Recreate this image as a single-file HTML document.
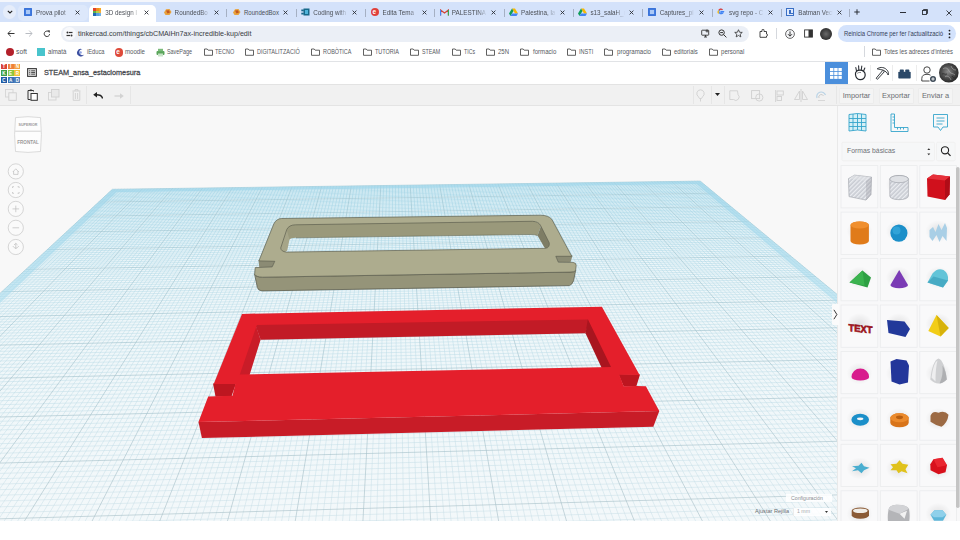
<!DOCTYPE html>
<html><head><meta charset="utf-8">
<style>
*{margin:0;padding:0;box-sizing:border-box}
html,body{width:960px;height:540px;overflow:hidden;background:#fff;font-family:"Liberation Sans",sans-serif;position:relative}
.a{position:absolute}
.tt{font-size:6.3px;line-height:9px;color:#4b4f56;white-space:nowrap;overflow:hidden;-webkit-mask-image:linear-gradient(90deg,#000 72%,transparent 97%)}
.bmt{top:47.5px;font-size:6.5px;line-height:9px;color:#3a3d42;white-space:nowrap}
.tbi{position:absolute;top:87px}
.btn{position:absolute;top:87.5px;height:16.5px;background:#f4f4f4;border:1px solid #ececec;border-radius:1px;font-size:7.4px;line-height:14.5px;color:#6a6d72;text-align:center}
.cell{position:absolute;width:36.5px;height:42.5px;background:#f4f5f6;border-radius:1px}
</style></head><body>
<div class="a" style="left:0;top:0;width:960px;height:2px;background:#f4f6fb"></div>
<div class="a" style="left:0;top:2px;width:960px;height:20px;background:#d4e2fa"></div>
<div class="a" style="left:18px;top:4.5px;width:70px;height:16.5px;border-radius:5px;background:#dde8fb"></div>
<div class="a" style="left:3px;top:5px;width:13px;height:14px;border-radius:7px;background:#e6edfa"></div>
<svg class="a" style="left:7px;top:10px" width="6" height="4" viewBox="0 0 6 4"><path d="M0.8 0.8 L3 3 L5.2 0.8" stroke="#222" stroke-width="1.1" fill="none"/></svg>
<div class="a" style="left:24.0px;top:8px;width:8px;height:8px;border-radius:1px;background:#4a86e8;box-shadow:inset 0 0 0 1.5px #3b73d8"><div style="position:absolute;left:2px;top:2px;width:4px;height:4px;background:#aac8f6"></div></div>
<div class="a tt" style="left:36.0px;top:8px;width:36px">Prova pilot</div>
<svg class="a" style="left:75.0px;top:10px" width="5" height="5" viewBox="0 0 5 5"><path d="M0.6 0.6L4.4 4.4M4.4 0.6L0.6 4.4" stroke="#2b2f36" stroke-width="0.9"/></svg>
<div class="a" style="left:88.5px;top:5px;width:67.5px;height:17px;background:#fff;border-radius:5px 5px 0 0"></div>
<div class="a" style="left:93.3px;top:8px;width:8px;height:8px"><div style="position:absolute;left:0.00px;top:0.00px;width:2.67px;height:2.67px;background:#e2412c"></div><div style="position:absolute;left:2.67px;top:0.00px;width:2.67px;height:2.67px;background:#f38c20"></div><div style="position:absolute;left:5.34px;top:0.00px;width:2.67px;height:2.67px;background:#f5a623"></div><div style="position:absolute;left:0.00px;top:2.67px;width:2.67px;height:2.67px;background:#60b246"></div><div style="position:absolute;left:2.67px;top:2.67px;width:2.67px;height:2.67px;background:#b2cf4a"></div><div style="position:absolute;left:5.34px;top:2.67px;width:2.67px;height:2.67px;background:#f3ae3e"></div><div style="position:absolute;left:0.00px;top:5.34px;width:2.67px;height:2.67px;background:#2167b1"></div><div style="position:absolute;left:2.67px;top:5.34px;width:2.67px;height:2.67px;background:#5da0dd"></div><div style="position:absolute;left:5.34px;top:5.34px;width:2.67px;height:2.67px;background:#6fb0e6"></div></div>
<div class="a tt" style="left:105.3px;top:8px;width:36px">3D design l</div>
<svg class="a" style="left:144.3px;top:10px" width="5" height="5" viewBox="0 0 5 5"><path d="M0.6 0.6L4.4 4.4M4.4 0.6L0.6 4.4" stroke="#2b2f36" stroke-width="0.9"/></svg>
<svg class="a" style="left:162.6px;top:8px" width="9" height="8" viewBox="0 0 9 8"><path d="M1 4.5L3 1.2L6.5 1L8.5 4L6.5 7L2.5 7Z" fill="#e8a13a"/><path d="M3 2.5L6 2.2L7 4.5L4.5 5.5Z" fill="#c2571f"/></svg>
<div class="a tt" style="left:174.6px;top:8px;width:36px">RoundedBo</div>
<svg class="a" style="left:213.6px;top:10px" width="5" height="5" viewBox="0 0 5 5"><path d="M0.6 0.6L4.4 4.4M4.4 0.6L0.6 4.4" stroke="#2b2f36" stroke-width="0.9"/></svg>
<div class="a" style="left:226.4px;top:9px;width:1px;height:8px;background:#a5b0c3"></div>
<svg class="a" style="left:231.9px;top:8px" width="9" height="8" viewBox="0 0 9 8"><path d="M1 4.5L3 1.2L6.5 1L8.5 4L6.5 7L2.5 7Z" fill="#e8a13a"/><path d="M3 2.5L6 2.2L7 4.5L4.5 5.5Z" fill="#c2571f"/></svg>
<svg class="a" style="left:243.90px;top:14.80px;overflow:visible" width="1" height="1"><text x="0" y="0" font-family="Liberation Sans" font-size="6.3" fill="#4b4f56" font-weight="normal" textLength="35" lengthAdjust="spacingAndGlyphs">RoundedBox</text></svg>
<svg class="a" style="left:282.9px;top:10px" width="5" height="5" viewBox="0 0 5 5"><path d="M0.6 0.6L4.4 4.4M4.4 0.6L0.6 4.4" stroke="#2b2f36" stroke-width="0.9"/></svg>
<div class="a" style="left:295.7px;top:9px;width:1px;height:8px;background:#a5b0c3"></div>
<svg class="a" style="left:301.2px;top:8px" width="9" height="8" viewBox="0 0 9 8"><rect x="2.5" y="0.5" width="6" height="7" fill="#17698a"/><rect x="0.3" y="1.5" width="2.5" height="1.8" fill="#17698a"/><rect x="0.3" y="4.7" width="2.5" height="1.8" fill="#17698a"/><rect x="4" y="2" width="3" height="4" fill="#4fb3d9"/></svg>
<div class="a tt" style="left:313.2px;top:8px;width:36px">Coding with</div>
<svg class="a" style="left:352.2px;top:10px" width="5" height="5" viewBox="0 0 5 5"><path d="M0.6 0.6L4.4 4.4M4.4 0.6L0.6 4.4" stroke="#2b2f36" stroke-width="0.9"/></svg>
<div class="a" style="left:365.0px;top:9px;width:1px;height:8px;background:#a5b0c3"></div>
<div class="a" style="left:370.5px;top:8px;width:8px;height:8px;border-radius:4px;background:#e0403a"><div style="position:absolute;left:2px;top:-1px;font-size:6.5px;line-height:9px;color:#fff;font-weight:bold;font-family:Liberation Sans,sans-serif">e</div></div>
<div class="a tt" style="left:382.5px;top:8px;width:36px">Edita Tema</div>
<svg class="a" style="left:421.5px;top:10px" width="5" height="5" viewBox="0 0 5 5"><path d="M0.6 0.6L4.4 4.4M4.4 0.6L0.6 4.4" stroke="#2b2f36" stroke-width="0.9"/></svg>
<div class="a" style="left:434.3px;top:9px;width:1px;height:8px;background:#a5b0c3"></div>
<svg class="a" style="left:439.8px;top:8.5px" width="9" height="7" viewBox="0 0 9 7"><path d="M0.5 6.5V1L4.5 4L8.5 1V6.5" stroke="#d44638" stroke-width="1.3" fill="none"/><path d="M0.5 6.5V1" stroke="#4285f4" stroke-width="1.3"/><path d="M8.5 6.5V1" stroke="#34a853" stroke-width="1.3"/></svg>
<div class="a tt" style="left:451.8px;top:8px;width:36px">PALESTINA</div>
<svg class="a" style="left:490.8px;top:10px" width="5" height="5" viewBox="0 0 5 5"><path d="M0.6 0.6L4.4 4.4M4.4 0.6L0.6 4.4" stroke="#2b2f36" stroke-width="0.9"/></svg>
<div class="a" style="left:503.6px;top:9px;width:1px;height:8px;background:#a5b0c3"></div>
<svg class="a" style="left:509.1px;top:8px" width="9" height="8" viewBox="0 0 9 8"><path d="M3 0.5H6L9 5.5H6Z" fill="#f6b704"/><path d="M3 0.5L0 5.5L1.5 8L4.5 3Z" fill="#0f9d58"/><path d="M1.5 8H7.5L9 5.5H3Z" fill="#4285f4"/></svg>
<div class="a tt" style="left:521.1px;top:8px;width:36px">Palestina, la</div>
<svg class="a" style="left:560.1px;top:10px" width="5" height="5" viewBox="0 0 5 5"><path d="M0.6 0.6L4.4 4.4M4.4 0.6L0.6 4.4" stroke="#2b2f36" stroke-width="0.9"/></svg>
<div class="a" style="left:572.9px;top:9px;width:1px;height:8px;background:#a5b0c3"></div>
<svg class="a" style="left:578.4px;top:8px" width="9" height="8" viewBox="0 0 9 8"><path d="M3 0.5H6L9 5.5H6Z" fill="#f6b704"/><path d="M3 0.5L0 5.5L1.5 8L4.5 3Z" fill="#0f9d58"/><path d="M1.5 8H7.5L9 5.5H3Z" fill="#4285f4"/></svg>
<div class="a tt" style="left:590.4px;top:8px;width:36px">s13_salaH_m</div>
<svg class="a" style="left:629.4px;top:10px" width="5" height="5" viewBox="0 0 5 5"><path d="M0.6 0.6L4.4 4.4M4.4 0.6L0.6 4.4" stroke="#2b2f36" stroke-width="0.9"/></svg>
<div class="a" style="left:642.2px;top:9px;width:1px;height:8px;background:#a5b0c3"></div>
<div class="a" style="left:647.7px;top:8px;width:8px;height:8px;border-radius:1px;background:#4a86e8;box-shadow:inset 0 0 0 1.5px #3b73d8"><div style="position:absolute;left:2px;top:2px;width:4px;height:4px;background:#aac8f6"></div></div>
<div class="a tt" style="left:659.7px;top:8px;width:36px">Captures_pi</div>
<svg class="a" style="left:698.7px;top:10px" width="5" height="5" viewBox="0 0 5 5"><path d="M0.6 0.6L4.4 4.4M4.4 0.6L0.6 4.4" stroke="#2b2f36" stroke-width="0.9"/></svg>
<div class="a" style="left:711.5px;top:9px;width:1px;height:8px;background:#a5b0c3"></div>
<svg class="a" style="left:717.0px;top:8px" width="8" height="8" viewBox="0 0 8 8"><path d="M7.2 3.5H4V4.8H5.9A2.2 2.2 0 1 1 5.4 1.8" stroke="#4285f4" stroke-width="1.2" fill="none"/><path d="M1.8 2.3A2.4 2.4 0 0 1 5.5 1.7" stroke="#ea4335" stroke-width="1.2" fill="none"/><path d="M1.6 5.5A2.4 2.4 0 0 1 1.6 2.6" stroke="#fbbc05" stroke-width="1.2" fill="none"/></svg>
<div class="a tt" style="left:729.0px;top:8px;width:36px">svg repo - C</div>
<svg class="a" style="left:768.0px;top:10px" width="5" height="5" viewBox="0 0 5 5"><path d="M0.6 0.6L4.4 4.4M4.4 0.6L0.6 4.4" stroke="#2b2f36" stroke-width="0.9"/></svg>
<div class="a" style="left:780.8px;top:9px;width:1px;height:8px;background:#a5b0c3"></div>
<div class="a" style="left:786.3px;top:8px;width:8px;height:8px;border:1px solid #3a6fc4;background:#dfe9fb"><div style="position:absolute;left:2px;top:1px;width:1.5px;height:4px;background:#3a6fc4"></div><div style="position:absolute;left:2px;top:4px;width:3.5px;height:1.2px;background:#3a6fc4"></div></div>
<div class="a tt" style="left:798.3px;top:8px;width:36px">Batman Vect</div>
<svg class="a" style="left:837.3px;top:10px" width="5" height="5" viewBox="0 0 5 5"><path d="M0.6 0.6L4.4 4.4M4.4 0.6L0.6 4.4" stroke="#2b2f36" stroke-width="0.9"/></svg>
<div class="a" style="left:848.5px;top:9px;width:1px;height:8px;background:#a5b0c3"></div>
<svg class="a" style="left:854px;top:9px" width="6" height="6" viewBox="0 0 6 6"><path d="M3 0.3V5.7M0.3 3H5.7" stroke="#2b2f36" stroke-width="1"/></svg>
<div class="a" style="left:900px;top:12px;width:6px;height:1px;background:#2b2f36"></div>
<svg class="a" style="left:922px;top:9px" width="6" height="6" viewBox="0 0 6 6"><path d="M1.5 1.5V0.5H5.5V4.5H4.5" stroke="#2b2f36" stroke-width="0.9" fill="none"/><rect x="0.5" y="1.5" width="4" height="4" stroke="#2b2f36" stroke-width="0.9" fill="none"/></svg>
<svg class="a" style="left:945.5px;top:9.5px" width="6" height="6" viewBox="0 0 6 6"><path d="M0.5 0.5L5.5 5.5M5.5 0.5L0.5 5.5" stroke="#2b2f36" stroke-width="0.9"/></svg>
<div class="a" style="left:0;top:22px;width:960px;height:20px;background:#fff"></div>
<svg class="a" style="left:7px;top:30px" width="8" height="7" viewBox="0 0 8 7"><path d="M7.5 3.5H1M3.8 0.6L0.9 3.5L3.8 6.4" stroke="#333" stroke-width="1" fill="none"/></svg>
<svg class="a" style="left:25px;top:30px" width="8" height="7" viewBox="0 0 8 7"><path d="M0.5 3.5H7M4.2 0.6L7.1 3.5L4.2 6.4" stroke="#b9bcc2" stroke-width="1" fill="none"/></svg>
<svg class="a" style="left:43px;top:29.5px" width="8" height="8" viewBox="0 0 8 8"><path d="M6.6 4.2A2.7 2.7 0 1 1 5.6 1.7" stroke="#333" stroke-width="1" fill="none"/><path d="M4.4 0.3L7 0.6L6.5 3.1Z" fill="#333"/></svg>
<div class="a" style="left:61px;top:25.5px;width:688px;height:16px;border-radius:8px;background:#ebeff6"></div>
<div class="a" style="left:62.5px;top:27px;width:13px;height:13px;border-radius:7px;background:#f8f9fc"></div>
<svg class="a" style="left:65.5px;top:30.5px" width="7" height="6" viewBox="0 0 7 6"><circle cx="1.5" cy="1.5" r="1" fill="#333"/><rect x="3" y="0.9" width="3.5" height="1.2" fill="#333"/><rect x="0.5" y="3.9" width="3.5" height="1.2" fill="#333"/><circle cx="5.5" cy="4.5" r="1" fill="#333"/></svg>
<svg class="a" style="left:78.30px;top:36.00px;overflow:visible" width="1" height="1"><text x="0" y="0" font-family="Liberation Sans" font-size="7.1" fill="#3a3d42" font-weight="normal" textLength="173.4" lengthAdjust="spacingAndGlyphs">tinkercad.com/things/cbCMAiHn7ax-incredible-kup/edit</text></svg>
<svg class="a" style="left:701px;top:29px" width="9" height="9" viewBox="0 0 9 9"><rect x="0.7" y="1.2" width="7" height="5" rx="0.5" stroke="#333" stroke-width="0.9" fill="none"/><path d="M3 8H6M4.5 6V8" stroke="#333" stroke-width="0.9"/><path d="M6 0.5V3.5M4.5 2H7.5" stroke="#333" stroke-width="0.9"/></svg>
<svg class="a" style="left:718px;top:29px" width="9" height="9" viewBox="0 0 9 9"><circle cx="3.6" cy="3.6" r="2.7" stroke="#333" stroke-width="1" fill="none"/><path d="M5.6 5.6L8.4 8.4M2.2 3.6H5" stroke="#333" stroke-width="1"/></svg>
<svg class="a" style="left:734px;top:29px" width="9" height="9" viewBox="0 0 10 10"><path d="M5 0.8L6.2 3.6L9.2 3.8L6.9 5.8L7.6 8.8L5 7.2L2.4 8.8L3.1 5.8L0.8 3.8L3.8 3.6Z" stroke="#333" stroke-width="0.9" fill="none" stroke-linejoin="round"/></svg>
<svg class="a" style="left:759px;top:29px" width="9" height="9" viewBox="0 0 9 9"><path d="M1 2.5H3V1.2A1 1 0 0 1 5 1.2V2.5H7.5V5A1 1 0 0 1 7.5 7V8.3H1Z" stroke="#333" stroke-width="0.9" fill="none"/></svg>
<div class="a" style="left:775.5px;top:28px;width:1px;height:11px;background:#d5d8dd"></div>
<svg class="a" style="left:785px;top:28.5px" width="10" height="10" viewBox="0 0 10 10"><circle cx="5" cy="5" r="4.4" stroke="#444" stroke-width="0.8" fill="#f6f7f9"/><path d="M5 2.4V7M3 5.2L5 7.2L7 5.2" stroke="#222" stroke-width="0.9" fill="none"/></svg>
<svg class="a" style="left:803.5px;top:29px" width="9" height="9" viewBox="0 0 9 9"><rect x="0.6" y="0.9" width="7.8" height="7.2" stroke="#333" stroke-width="0.9" fill="none"/><rect x="4.5" y="0.9" width="3.9" height="7.2" fill="#333"/></svg>
<div class="a" style="left:820px;top:27.5px;width:12px;height:12px;border-radius:6px;background:radial-gradient(circle at 50% 50%,#6a6a6a 0,#3c3c3c 55%,#1a1a1a 100%)"></div>
<div class="a" style="left:837.5px;top:25px;width:118.5px;height:16.5px;border-radius:8.5px;background:#d3e2fc"></div>
<svg class="a" style="left:843.50px;top:36.00px;overflow:visible" width="1" height="1"><text x="0" y="0" font-family="Liberation Sans" font-size="6.9" fill="#34405a" font-weight="normal" textLength="99" lengthAdjust="spacingAndGlyphs">Reinicia Chrome per fer l'actualització</text></svg>
<svg class="a" style="left:947.5px;top:28.5px" width="3" height="10" viewBox="0 0 3 10"><circle cx="1.5" cy="1.6" r="0.9" fill="#222"/><circle cx="1.5" cy="5" r="0.9" fill="#222"/><circle cx="1.5" cy="8.4" r="0.9" fill="#222"/></svg>
<div class="a" style="left:0;top:42px;width:960px;height:20px;background:#fff;border-bottom:1px solid #e1e3e6"></div>
<div class="a" style="left:6px;top:48px;width:8px;height:8px;border-radius:4px;background:#b3202a"></div>
<svg class="a" style="left:15.80px;top:54.30px;overflow:visible" width="1" height="1"><text x="0" y="0" font-family="Liberation Sans" font-size="6.7" fill="#55585e" font-weight="normal" textLength="10.9" lengthAdjust="spacingAndGlyphs">soft</text></svg>
<div class="a" style="left:37px;top:48px;width:8px;height:8px;background:#49c4cc"></div>
<svg class="a" style="left:47.50px;top:54.30px;overflow:visible" width="1" height="1"><text x="0" y="0" font-family="Liberation Sans" font-size="6.7" fill="#55585e" font-weight="normal" textLength="18.3" lengthAdjust="spacingAndGlyphs">almatà</text></svg>
<svg class="a" style="left:75.5px;top:47.5px" width="9" height="9" viewBox="0 0 9 9"><path d="M6.5 1.2A3.8 3.8 0 1 0 8.2 6.5A3 3 0 1 1 6.5 1.2Z" fill="#3b4fa0"/><circle cx="4.5" cy="4.5" r="1.3" fill="#8fa2e0"/></svg>
<svg class="a" style="left:86.70px;top:54.30px;overflow:visible" width="1" height="1"><text x="0" y="0" font-family="Liberation Sans" font-size="6.7" fill="#55585e" font-weight="normal" textLength="17.5" lengthAdjust="spacingAndGlyphs">iEduca</text></svg>
<div class="a" style="left:114.5px;top:48px;width:8.5px;height:8.5px;border-radius:4.3px;background:#de4a3a"></div>
<div class="a" style="left:116.3px;top:47.3px;font-size:6.5px;line-height:9px;color:#fff;font-weight:bold">e</div>
<svg class="a" style="left:125.00px;top:54.30px;overflow:visible" width="1" height="1"><text x="0" y="0" font-family="Liberation Sans" font-size="6.7" fill="#55585e" font-weight="normal" textLength="20" lengthAdjust="spacingAndGlyphs">moodle</text></svg>
<svg class="a" style="left:156px;top:47.5px" width="9" height="9" viewBox="0 0 9 9"><rect x="0.5" y="3" width="8" height="4" rx="1" fill="#5aa55a"/><rect x="2" y="0.8" width="5" height="2.5" fill="#7bbb7b"/><rect x="2" y="5.5" width="5" height="3" fill="#c7e3c7"/></svg>
<svg class="a" style="left:166.70px;top:54.30px;overflow:visible" width="1" height="1"><text x="0" y="0" font-family="Liberation Sans" font-size="6.7" fill="#55585e" font-weight="normal" textLength="25" lengthAdjust="spacingAndGlyphs">SavePage</text></svg>
<svg class="a" style="left:203.5px;top:48px" width="9" height="8" viewBox="0 0 9 8"><path d="M0.5 1V7.3H8.5V2.2H4.2L3.2 1Z" stroke="#444" stroke-width="0.85" fill="none" stroke-linejoin="round"/></svg>
<svg class="a" style="left:215.00px;top:54.30px;overflow:visible" width="1" height="1"><text x="0" y="0" font-family="Liberation Sans" font-size="6.7" fill="#55585e" font-weight="normal" textLength="19.3" lengthAdjust="spacingAndGlyphs">TECNO</text></svg>
<svg class="a" style="left:245.0px;top:48px" width="9" height="8" viewBox="0 0 9 8"><path d="M0.5 1V7.3H8.5V2.2H4.2L3.2 1Z" stroke="#444" stroke-width="0.85" fill="none" stroke-linejoin="round"/></svg>
<svg class="a" style="left:257.30px;top:54.30px;overflow:visible" width="1" height="1"><text x="0" y="0" font-family="Liberation Sans" font-size="6.7" fill="#55585e" font-weight="normal" textLength="42.7" lengthAdjust="spacingAndGlyphs">DIGITALITZACIÓ</text></svg>
<svg class="a" style="left:311.0px;top:48px" width="9" height="8" viewBox="0 0 9 8"><path d="M0.5 1V7.3H8.5V2.2H4.2L3.2 1Z" stroke="#444" stroke-width="0.85" fill="none" stroke-linejoin="round"/></svg>
<svg class="a" style="left:323.30px;top:54.30px;overflow:visible" width="1" height="1"><text x="0" y="0" font-family="Liberation Sans" font-size="6.7" fill="#55585e" font-weight="normal" textLength="28.4" lengthAdjust="spacingAndGlyphs">ROBÒTICA</text></svg>
<svg class="a" style="left:362.8px;top:48px" width="9" height="8" viewBox="0 0 9 8"><path d="M0.5 1V7.3H8.5V2.2H4.2L3.2 1Z" stroke="#444" stroke-width="0.85" fill="none" stroke-linejoin="round"/></svg>
<svg class="a" style="left:375.00px;top:54.30px;overflow:visible" width="1" height="1"><text x="0" y="0" font-family="Liberation Sans" font-size="6.7" fill="#55585e" font-weight="normal" textLength="24" lengthAdjust="spacingAndGlyphs">TUTORIA</text></svg>
<svg class="a" style="left:410.0px;top:48px" width="9" height="8" viewBox="0 0 9 8"><path d="M0.5 1V7.3H8.5V2.2H4.2L3.2 1Z" stroke="#444" stroke-width="0.85" fill="none" stroke-linejoin="round"/></svg>
<svg class="a" style="left:421.70px;top:54.30px;overflow:visible" width="1" height="1"><text x="0" y="0" font-family="Liberation Sans" font-size="6.7" fill="#55585e" font-weight="normal" textLength="18.3" lengthAdjust="spacingAndGlyphs">STEAM</text></svg>
<svg class="a" style="left:451.8px;top:48px" width="9" height="8" viewBox="0 0 9 8"><path d="M0.5 1V7.3H8.5V2.2H4.2L3.2 1Z" stroke="#444" stroke-width="0.85" fill="none" stroke-linejoin="round"/></svg>
<svg class="a" style="left:464.00px;top:54.30px;overflow:visible" width="1" height="1"><text x="0" y="0" font-family="Liberation Sans" font-size="6.7" fill="#55585e" font-weight="normal" textLength="11" lengthAdjust="spacingAndGlyphs">TICs</text></svg>
<svg class="a" style="left:486.0px;top:48px" width="9" height="8" viewBox="0 0 9 8"><path d="M0.5 1V7.3H8.5V2.2H4.2L3.2 1Z" stroke="#444" stroke-width="0.85" fill="none" stroke-linejoin="round"/></svg>
<svg class="a" style="left:498.30px;top:54.30px;overflow:visible" width="1" height="1"><text x="0" y="0" font-family="Liberation Sans" font-size="6.7" fill="#55585e" font-weight="normal" textLength="11" lengthAdjust="spacingAndGlyphs">25N</text></svg>
<svg class="a" style="left:520.0px;top:48px" width="9" height="8" viewBox="0 0 9 8"><path d="M0.5 1V7.3H8.5V2.2H4.2L3.2 1Z" stroke="#444" stroke-width="0.85" fill="none" stroke-linejoin="round"/></svg>
<svg class="a" style="left:532.70px;top:54.30px;overflow:visible" width="1" height="1"><text x="0" y="0" font-family="Liberation Sans" font-size="6.7" fill="#55585e" font-weight="normal" textLength="23.3" lengthAdjust="spacingAndGlyphs">formacio</text></svg>
<svg class="a" style="left:566.8px;top:48px" width="9" height="8" viewBox="0 0 9 8"><path d="M0.5 1V7.3H8.5V2.2H4.2L3.2 1Z" stroke="#444" stroke-width="0.85" fill="none" stroke-linejoin="round"/></svg>
<svg class="a" style="left:579.00px;top:54.30px;overflow:visible" width="1" height="1"><text x="0" y="0" font-family="Liberation Sans" font-size="6.7" fill="#55585e" font-weight="normal" textLength="14.3" lengthAdjust="spacingAndGlyphs">INSTI</text></svg>
<svg class="a" style="left:604.2px;top:48px" width="9" height="8" viewBox="0 0 9 8"><path d="M0.5 1V7.3H8.5V2.2H4.2L3.2 1Z" stroke="#444" stroke-width="0.85" fill="none" stroke-linejoin="round"/></svg>
<svg class="a" style="left:616.70px;top:54.30px;overflow:visible" width="1" height="1"><text x="0" y="0" font-family="Liberation Sans" font-size="6.7" fill="#55585e" font-weight="normal" textLength="34" lengthAdjust="spacingAndGlyphs">programacio</text></svg>
<svg class="a" style="left:661.5px;top:48px" width="9" height="8" viewBox="0 0 9 8"><path d="M0.5 1V7.3H8.5V2.2H4.2L3.2 1Z" stroke="#444" stroke-width="0.85" fill="none" stroke-linejoin="round"/></svg>
<svg class="a" style="left:674.00px;top:54.30px;overflow:visible" width="1" height="1"><text x="0" y="0" font-family="Liberation Sans" font-size="6.7" fill="#55585e" font-weight="normal" textLength="23.7" lengthAdjust="spacingAndGlyphs">editorials</text></svg>
<svg class="a" style="left:708.5px;top:48px" width="9" height="8" viewBox="0 0 9 8"><path d="M0.5 1V7.3H8.5V2.2H4.2L3.2 1Z" stroke="#444" stroke-width="0.85" fill="none" stroke-linejoin="round"/></svg>
<svg class="a" style="left:720.70px;top:54.30px;overflow:visible" width="1" height="1"><text x="0" y="0" font-family="Liberation Sans" font-size="6.7" fill="#55585e" font-weight="normal" textLength="23.3" lengthAdjust="spacingAndGlyphs">personal</text></svg>
<svg class="a" style="left:872.0px;top:48px" width="9" height="8" viewBox="0 0 9 8"><path d="M0.5 1V7.3H8.5V2.2H4.2L3.2 1Z" stroke="#444" stroke-width="0.85" fill="none" stroke-linejoin="round"/></svg>
<svg class="a" style="left:884.00px;top:54.30px;overflow:visible" width="1" height="1"><text x="0" y="0" font-family="Liberation Sans" font-size="6.7" fill="#55585e" font-weight="normal" textLength="69" lengthAdjust="spacingAndGlyphs">Totes les adreces d'interès</text></svg>
<div class="a" style="left:863.5px;top:46px;width:1px;height:11px;background:#d5d8dd"></div>
<!-- tinkercad header -->
<div class="a" style="left:0;top:62px;width:960px;height:23px;background:#fff;border-bottom:1px solid #e3e3e3"></div>
<div class="a" style="left:1px;top:63.8px;width:19.5px;height:19.2px">
<div class="a" style="left:0;top:0;width:5.8px;height:5.4px;background:#d9443a"></div>
<div class="a" style="left:6.6px;top:0;width:6px;height:5.4px;background:#ef7f3a"></div>
<div class="a" style="left:13.3px;top:0;width:6px;height:5.4px;background:#f3a041"></div>
<div class="a" style="left:0;top:6.2px;width:5.8px;height:5.8px;background:#3f9f49"></div>
<div class="a" style="left:6.6px;top:6.2px;width:6px;height:5.8px;background:#8cc63f"></div>
<div class="a" style="left:13.3px;top:6.2px;width:6px;height:5.8px;background:#f2c332"></div>
<div class="a" style="left:0;top:12.8px;width:5.8px;height:6px;background:#1f5aa3"></div>
<div class="a" style="left:6.6px;top:12.8px;width:6px;height:6px;background:#3a72b5"></div>
<div class="a" style="left:13.3px;top:12.8px;width:6px;height:6px;background:#4a7db8"></div>
<svg class="a" style="left:0;top:0" width="20" height="19" viewBox="0 0 20 19"><g font-family="Liberation Sans" font-weight="bold" font-size="4.6" fill="#fff" text-anchor="middle"><text x="2.9" y="4.4">T</text><text x="9.6" y="4.4">I</text><text x="16.3" y="4.4">N</text><text x="2.9" y="10.8">K</text><text x="9.6" y="10.8">E</text><text x="16.3" y="10.8">R</text><text x="2.9" y="17.5">C</text><text x="9.6" y="17.5">A</text><text x="16.3" y="17.5">D</text></g></svg>
</div>
<svg class="a" style="left:26.5px;top:67.5px" width="10" height="9" viewBox="0 0 10 9"><rect x="0.6" y="0.6" width="8.8" height="7.8" fill="#d9d9d9" stroke="#333" stroke-width="1"/><path d="M2.2 2.8H3.2M4.2 2.8H8M2.2 4.5H3.2M4.2 4.5H8M2.2 6.2H3.2M4.2 6.2H8" stroke="#444" stroke-width="0.9"/></svg>
<svg class="a" style="left:43.7px;top:75.3px;overflow:visible" width="1" height="1"><text x="0" y="0" font-family="Liberation Sans" font-size="7.8" font-weight="normal" fill="#45484d" stroke="#45484d" stroke-width="0.28" textLength="96.3" lengthAdjust="spacingAndGlyphs">STEAM_ansa_estaciomesura</text></svg>
<div class="a" style="left:825px;top:62.2px;width:22.7px;height:21.8px;background:#4b8fdc"></div>
<svg class="a" style="left:830px;top:68px" width="12" height="11" viewBox="0 0 12 11"><g fill="#fff"><rect x="0" y="0" width="3.4" height="3.1"/><rect x="4.2" y="0" width="3.4" height="3.1"/><rect x="8.4" y="0" width="3.4" height="3.1"/><rect x="0" y="3.9" width="3.4" height="3.1"/><rect x="4.2" y="3.9" width="3.4" height="3.1"/><rect x="8.4" y="3.9" width="3.4" height="3.1"/><rect x="0" y="7.8" width="3.4" height="3.1"/><rect x="4.2" y="7.8" width="3.4" height="3.1"/><rect x="8.4" y="7.8" width="3.4" height="3.1"/></g></svg>
<div class="a" style="left:870px;top:65px;width:1px;height:16px;background:#ececec"></div>
<div class="a" style="left:892px;top:65px;width:1px;height:16px;background:#ececec"></div>
<div class="a" style="left:915.5px;top:65px;width:1px;height:16px;background:#ececec"></div>
<svg class="a" style="left:852.5px;top:64px" width="14" height="17" viewBox="0 0 14 17"><path d="M2.5 10.5C2 8 4 6.2 7 6.2C10 6.2 12.3 8 12.2 11C12.1 14 10 15.8 7 15.6C4 15.4 2.8 13.5 2.5 10.5Z" stroke="#252a30" stroke-width="1.2" fill="#fff"/><path d="M4.2 9.5C5 8.5 6.5 8.2 8 8.6" stroke="#555" stroke-width="0.7" fill="none"/><path d="M3.5 6.8L2.8 3.5M5.8 5.8L5.6 1.8M8.3 5.8L8.8 2M10.6 7L11.8 4" stroke="#2e3238" stroke-width="1.1" stroke-linecap="round"/></svg>
<svg class="a" style="left:874.5px;top:65.5px" width="14" height="15" viewBox="0 0 14 15"><path d="M2.2 2.8C5.5 0.6 10 1 12.6 4.8C13.4 6 13.6 7.5 13.2 9C12.2 6.8 10.5 5 8.2 4.2C6.5 3.6 4.2 3.4 2.2 2.8Z" stroke="#23272c" stroke-width="0.9" fill="#fff" stroke-linejoin="round"/><path d="M7.8 4.3L1.2 12.2L2.4 13.4L9.4 5.6Z" stroke="#23272c" stroke-width="0.9" fill="#fff" stroke-linejoin="round"/></svg>
<svg class="a" style="left:897.5px;top:68.5px" width="13" height="10" viewBox="0 0 13 10"><rect x="0.3" y="2.8" width="12.4" height="6.8" rx="0.8" fill="#2a4868"/><rect x="1.8" y="0.6" width="4" height="2.8" rx="0.6" fill="#2a4868"/><rect x="7.3" y="0.6" width="4" height="2.8" rx="0.6" fill="#2a4868"/></svg>
<svg class="a" style="left:921px;top:66px" width="16" height="17" viewBox="0 0 16 17"><circle cx="6" cy="4" r="3.2" stroke="#333" stroke-width="0.9" fill="none"/><path d="M0.8 15V12.5C0.8 9.5 3 8.3 6 8.3C7.5 8.3 8.6 8.6 9.5 9.2M0.8 15H8.5" stroke="#333" stroke-width="0.9" fill="none"/><circle cx="12" cy="13" r="3" fill="#3d4a57"/><path d="M12 11.3V14.7M10.3 13H13.7" stroke="#fff" stroke-width="0.9"/></svg>
<svg class="a" style="left:939px;top:63px" width="20" height="20" viewBox="0 0 20 20"><defs><radialGradient id="avg" cx="45%" cy="45%" r="55%"><stop offset="0" stop-color="#8a8a8a"/><stop offset="0.6" stop-color="#4b4b4b"/><stop offset="1" stop-color="#2b2b2b"/></radialGradient></defs><circle cx="9.8" cy="9.8" r="9.8" fill="url(#avg)"/><path d="M4 6C6 4 9 5 10 8C11 11 14 10 16 12M6 14C8 12 11 14 12 17M12 3C13 6 15 7 17 7" stroke="#c8c8c8" stroke-width="0.8" fill="none" opacity="0.6"/><path d="M3 11C5 10 6 12 8 11M13 13C14 15 15 15 17 15" stroke="#222" stroke-width="1" fill="none" opacity="0.7"/></svg>
<!-- toolbar -->
<div class="a" style="left:0;top:85px;width:960px;height:21px;background:#f1f1f1;border-bottom:1px solid #e4e4e4"></div>
<svg class="a" style="left:5px;top:89px" width="12" height="12" viewBox="0 0 12 12"><rect x="0.5" y="0.5" width="7.5" height="7.5" fill="none" stroke="#d5d5d5" stroke-width="0.9"/><rect x="3.8" y="3.8" width="7.5" height="7.5" fill="#f1f1f1" stroke="#d0d0d0" stroke-width="0.9"/></svg>
<svg class="a" style="left:26.5px;top:88.5px" width="11" height="12" viewBox="0 0 11 12"><path d="M6.5 2.5V1.5H1V10.5H3.5" fill="none" stroke="#333" stroke-width="1"/><rect x="2.8" y="0.5" width="2" height="1.6" fill="#333"/><rect x="4" y="4.5" width="6.3" height="6.8" fill="#fff" stroke="#333" stroke-width="1"/></svg>
<svg class="a" style="left:48px;top:89px" width="12" height="12" viewBox="0 0 12 12"><rect x="0.5" y="3.5" width="7.5" height="7.5" fill="none" stroke="#d3d3d3" stroke-width="0.9"/><rect x="3.5" y="0.5" width="7.5" height="7.5" fill="#e9e9e9" stroke="#d0d0d0" stroke-width="0.9"/></svg>
<svg class="a" style="left:71.5px;top:88.5px" width="9" height="12" viewBox="0 0 9 12"><path d="M0.5 2H8.5M3 2V0.7H6V2" fill="none" stroke="#d0d0d0" stroke-width="0.9"/><path d="M1.2 2.5V11.3H7.8V2.5M3.4 4V10M5.6 4V10" fill="none" stroke="#d0d0d0" stroke-width="0.9"/></svg>
<div class="a" style="left:86px;top:86px;width:1px;height:18px;background:#e6e6e6"></div>
<svg class="a" style="left:93px;top:91.5px" width="10" height="7" viewBox="0 0 10 7"><path d="M9.5 6.5C9 3.5 7 2.8 3.5 2.8" fill="none" stroke="#222" stroke-width="1.4"/><path d="M0.2 2.8L4 0V5.6Z" fill="#222"/></svg>
<svg class="a" style="left:113.5px;top:91.5px" width="10" height="7" viewBox="0 0 10 7"><path d="M0.5 4H6.5" fill="none" stroke="#d2d2d2" stroke-width="1.3"/><path d="M9.8 4L6 1.2V6.8Z" fill="#d2d2d2"/></svg>
<div class="a" style="left:130px;top:86px;width:1px;height:18px;background:#e6e6e6"></div>
<div class="a" style="left:692.5px;top:86px;width:1px;height:18px;background:#e6e6e6"></div>
<svg class="a" style="left:696px;top:89px" width="9" height="13" viewBox="0 0 9 13"><path d="M4.5 0.8A3.8 3.8 0 0 0 2.3 7.6L3.5 9.5H5.5L6.7 7.6A3.8 3.8 0 0 0 4.5 0.8Z" fill="none" stroke="#cfcfcf" stroke-width="0.9"/><path d="M4.5 9.5V12.5" stroke="#cfcfcf" stroke-width="0.9"/></svg>
<div class="a" style="left:710.5px;top:86px;width:1px;height:18px;background:#e6e6e6"></div>
<svg class="a" style="left:714.5px;top:93px" width="5" height="3" viewBox="0 0 5 3"><path d="M0 0H5L2.5 3Z" fill="#222"/></svg>
<div class="a" style="left:724px;top:86px;width:1px;height:18px;background:#e6e6e6"></div>
<svg class="a" style="left:728.5px;top:89.5px" width="13" height="12" viewBox="0 0 13 12"><path d="M0.8 0.8H8.5L9 4.5A3.3 3.3 0 1 1 4.5 9.5L0.8 9.5Z" fill="none" stroke="#d0d0d0" stroke-width="0.9"/></svg>
<svg class="a" style="left:751px;top:89.5px" width="13" height="12" viewBox="0 0 13 12"><rect x="0.6" y="0.6" width="8" height="8" fill="none" stroke="#d0d0d0" stroke-width="0.9"/><circle cx="8.3" cy="7.5" r="3.6" fill="none" stroke="#d0d0d0" stroke-width="0.9"/></svg>
<svg class="a" style="left:775px;top:89.5px" width="9" height="12" viewBox="0 0 9 12"><path d="M0.6 0V12" stroke="#d0d0d0" stroke-width="0.9"/><rect x="2" y="1" width="6.3" height="4" fill="none" stroke="#d0d0d0" stroke-width="0.9"/><rect x="2" y="6.5" width="4.5" height="4" fill="none" stroke="#d0d0d0" stroke-width="0.9"/></svg>
<svg class="a" style="left:793.5px;top:89px" width="14" height="13" viewBox="0 0 14 13"><path d="M7 0V13" stroke="#d0d0d0" stroke-width="0.9"/><path d="M8.5 2L13.5 10.5H8.5Z M5.5 2L0.5 10.5H5.5Z" fill="none" stroke="#d0d0d0" stroke-width="0.9"/></svg>
<svg class="a" style="left:815px;top:89px" width="12" height="13" viewBox="0 0 12 13"><path d="M2 9A4.5 4.5 0 1 1 10.5 6" fill="none" stroke="#b9d3e6" stroke-width="1.2"/><path d="M4 9A2.4 2.4 0 1 1 8.5 7" fill="none" stroke="#c8c8c8" stroke-width="0.9"/><path d="M3 11.5H10" stroke="#d4d4d4" stroke-width="0.9"/></svg>
<div class="a" style="left:835.5px;top:86px;width:1px;height:18px;background:#e6e6e6"></div>
<div class="btn" style="left:839px;width:35px">Importar</div>
<div class="btn" style="left:878.5px;width:35px">Exportar</div>
<div class="btn" style="left:918px;width:35px">Enviar a</div>

<!-- workplane -->
<div class="a" style="left:0;top:106px;width:837px;height:415px;background:#f8f8f8;overflow:hidden">
<svg width="837" height="415" viewBox="0 106 837 415" style="position:absolute;left:0;top:0">
<defs><linearGradient id="pf" gradientUnits="userSpaceOnUse" x1="0" y1="182" x2="0" y2="522"><stop offset="0" stop-color="#e5f4f9"/><stop offset="0.3" stop-color="#edf6f9"/><stop offset="1" stop-color="#f3f8fa"/></linearGradient></defs>
<polygon points="112.4,189.3 700.2,181.1 1147.5,551.3 -328.9,598.0" fill="url(#pf)"/>
<defs><linearGradient id="mg" gradientUnits="userSpaceOnUse" x1="0" y1="185" x2="0" y2="522"><stop offset="0" stop-color="#9ad0e3"/><stop offset="0.35" stop-color="#b8dbe7"/><stop offset="1" stop-color="#c8dee6"/></linearGradient><linearGradient id="Mg" gradientUnits="userSpaceOnUse" x1="0" y1="185" x2="0" y2="522"><stop offset="0" stop-color="#96c2d0"/><stop offset="1" stop-color="#a6bec6"/></linearGradient></defs>
<path d="M111.0 190.5L701.6 182.2M115.4 189.2L-321.0 597.8M109.7 191.7L703.0 183.4M118.4 189.2L-313.1 597.5M108.3 193.0L704.5 184.6M121.4 189.1L-305.2 597.3M107.0 194.3L705.9 185.8M124.4 189.1L-297.4 597.0M105.6 195.5L707.4 187.0M127.5 189.1L-289.5 596.8M104.2 196.8L708.8 188.2M130.5 189.0L-281.6 596.5M102.8 198.1L710.3 189.4M133.5 189.0L-273.8 596.3M101.4 199.5L711.8 190.7M136.5 188.9L-265.9 596.0M99.9 200.8L713.3 191.9M139.5 188.9L-258.1 595.8M97.0 203.5L716.4 194.4M145.5 188.8L-242.4 595.3M95.5 204.9L718.0 195.7M148.5 188.8L-234.6 595.0M94.0 206.2L719.5 197.0M151.5 188.7L-226.7 594.8M92.5 207.6L721.1 198.3M154.6 188.7L-218.9 594.5M91.0 209.1L722.7 199.7M157.6 188.6L-211.1 594.3M89.5 210.5L724.3 201.0M160.6 188.6L-203.3 594.0M87.9 211.9L726.0 202.4M163.6 188.6L-195.5 593.8M86.3 213.4L727.6 203.7M166.6 188.5L-187.7 593.5M84.8 214.8L729.3 205.1M169.6 188.5L-179.9 593.3M81.5 217.8L732.7 207.9M175.6 188.4L-164.3 592.8M79.9 219.3L734.4 209.3M178.6 188.3L-156.6 592.6M78.2 220.9L736.1 210.8M181.6 188.3L-148.8 592.3M76.6 222.4L737.9 212.2M184.6 188.3L-141.0 592.1M74.9 224.0L739.7 213.7M187.6 188.2L-133.3 591.8M73.2 225.6L741.4 215.2M190.6 188.2L-125.5 591.6M71.4 227.2L743.3 216.7M193.6 188.1L-117.8 591.3M69.7 228.8L745.1 218.2M196.6 188.1L-110.0 591.1M67.9 230.4L746.9 219.7M199.6 188.0L-102.3 590.8M64.3 233.7L750.7 222.8M205.6 188.0L-86.8 590.4M62.5 235.4L752.6 224.4M208.6 187.9L-79.1 590.1M60.7 237.1L754.5 226.0M211.5 187.9L-71.4 589.9M58.8 238.9L756.5 227.6M214.5 187.8L-63.6 589.6M56.9 240.6L758.4 229.2M217.5 187.8L-55.9 589.4M55.0 242.4L760.4 230.9M220.5 187.8L-48.2 589.1M53.1 244.2L762.4 232.5M223.5 187.7L-40.5 588.9M51.2 246.0L764.5 234.2M226.5 187.7L-32.8 588.6M49.2 247.8L766.5 235.9M229.5 187.6L-25.2 588.4M45.2 251.5L770.7 239.4M235.5 187.5L-9.8 587.9M43.1 253.4L772.8 241.2M238.4 187.5L-2.1 587.7M41.1 255.3L775.0 242.9M241.4 187.5L5.5 587.4M39.0 257.3L777.2 244.7M244.4 187.4L13.2 587.2M36.9 259.2L779.4 246.6M247.4 187.4L20.9 586.9M34.7 261.2L781.6 248.4M250.4 187.3L28.5 586.7M32.6 263.2L783.8 250.3M253.4 187.3L36.1 586.5M30.4 265.2L786.1 252.1M256.3 187.3L43.8 586.2M28.1 267.3L788.4 254.1M259.3 187.2L51.4 586.0M23.6 271.5L793.1 257.9M265.3 187.1L66.7 585.5M21.3 273.6L795.5 259.9M268.2 187.1L74.3 585.3M19.0 275.8L797.9 261.9M271.2 187.0L81.9 585.0M16.6 278.0L800.4 263.9M274.2 187.0L89.5 584.8M14.2 280.2L802.9 266.0M277.2 187.0L97.1 584.5M11.8 282.4L805.4 268.1M280.1 186.9L104.7 584.3M9.4 284.7L807.9 270.2M283.1 186.9L112.3 584.1M6.9 287.0L810.5 272.3M286.1 186.8L119.9 583.8M4.4 289.3L813.1 274.5M289.1 186.8L127.5 583.6M-0.8 294.1L818.4 278.8M295.0 186.7L142.6 583.1M-3.4 296.5L821.1 281.1M298.0 186.7L150.2 582.9M-6.0 298.9L823.8 283.3M300.9 186.6L157.8 582.6M-8.7 301.4L826.6 285.6M303.9 186.6L165.3 582.4M-11.4 303.9L829.4 288.0M306.9 186.5L172.9 582.1M-14.2 306.5L832.2 290.3M309.8 186.5L180.4 581.9M-17.0 309.1L835.1 292.7M312.8 186.5L188.0 581.7M-19.8 311.7L838.0 295.1M315.8 186.4L195.5 581.4M-22.7 314.4L841.0 297.6M318.7 186.4L203.0 581.2M-28.6 319.8L847.0 302.6M324.7 186.3L218.1 580.7M-31.6 322.6L850.1 305.1M327.6 186.3L225.6 580.5M-34.6 325.4L853.2 307.7M330.6 186.2L233.1 580.2M-37.7 328.3L856.4 310.3M333.5 186.2L240.6 580.0M-40.8 331.2L859.6 313.0M336.5 186.1L248.1 579.8M-44.0 334.1L862.9 315.7M339.5 186.1L255.6 579.5M-47.2 337.1L866.2 318.4M342.4 186.1L263.1 579.3M-50.5 340.1L869.5 321.2M345.4 186.0L270.6 579.0M-53.8 343.2L872.9 324.0M348.3 186.0L278.1 578.8M-60.6 349.5L879.9 329.7M354.2 185.9L293.0 578.3M-64.1 352.7L883.4 332.7M357.2 185.8L300.5 578.1M-67.6 356.0L887.0 335.7M360.1 185.8L307.9 577.9M-71.2 359.3L890.7 338.7M363.1 185.8L315.4 577.6M-74.8 362.6L894.4 341.8M366.0 185.7L322.9 577.4M-78.5 366.1L898.1 344.9M369.0 185.7L330.3 577.2M-82.2 369.5L902.0 348.0M371.9 185.6L337.7 576.9M-86.1 373.1L905.8 351.2M374.9 185.6L345.2 576.7M-89.9 376.7L909.8 354.5M377.8 185.6L352.6 576.4M-97.9 384.0L917.8 361.2M383.7 185.5L367.5 576.0M-101.9 387.8L922.0 364.6M386.7 185.4L374.9 575.7M-106.1 391.6L926.1 368.1M389.6 185.4L382.3 575.5M-110.3 395.5L930.4 371.6M392.6 185.4L389.7 575.3M-114.5 399.5L934.7 375.2M395.5 185.3L397.1 575.0M-118.9 403.5L939.1 378.8M398.5 185.3L404.5 574.8M-123.3 407.6L943.6 382.5M401.4 185.2L411.9 574.6M-127.8 411.7L948.1 386.3M404.3 185.2L419.3 574.3M-132.4 416.0L952.8 390.1M407.3 185.1L426.6 574.1M-141.8 424.7L962.2 397.9M413.2 185.1L441.4 573.6M-146.6 429.2L967.1 401.9M416.1 185.0L448.8 573.4M-151.5 433.7L972.0 406.0M419.0 185.0L456.1 573.2M-156.5 438.3L977.1 410.2M422.0 184.9L463.5 572.9M-161.6 443.1L982.2 414.4M424.9 184.9L470.8 572.7M-166.8 447.9L987.4 418.7M427.8 184.9L478.2 572.5M-172.1 452.8L992.7 423.1M430.8 184.8L485.5 572.2M-177.5 457.8L998.1 427.6M433.7 184.8L492.9 572.0M-183.0 462.9L1003.6 432.1M436.6 184.7L500.2 571.8M-194.3 473.3L1014.9 441.5M442.5 184.7L514.8 571.3M-200.1 478.7L1020.7 446.3M445.4 184.6L522.2 571.1M-206.1 484.2L1026.6 451.2M448.4 184.6L529.5 570.8M-212.1 489.8L1032.6 456.2M451.3 184.5L536.8 570.6M-218.3 495.6L1038.8 461.3M454.2 184.5L544.1 570.4M-224.6 501.4L1045.0 466.5M457.1 184.4L551.4 570.2M-231.1 507.4L1051.4 471.7M460.1 184.4L558.7 569.9M-237.6 513.5L1057.9 477.1M463.0 184.4L566.0 569.7M-244.4 519.7L1064.6 482.6M465.9 184.3L573.2 569.5M-258.2 532.5L1078.3 494.0M471.8 184.2L587.8 569.0M-265.4 539.2L1085.3 499.8M474.7 184.2L595.1 568.8M-272.7 546.0L1092.5 505.8M477.6 184.2L602.3 568.5M-280.2 552.9L1099.9 511.9M480.5 184.1L609.6 568.3M-287.9 560.0L1107.4 518.1M483.4 184.1L616.8 568.1M-295.7 567.2L1115.1 524.4M486.4 184.0L624.1 567.9M-303.7 574.7L1122.9 530.9M489.3 184.0L631.3 567.6M-311.9 582.3L1130.9 537.6M492.2 184.0L638.6 567.4M-320.3 590.0L1139.1 544.4M495.1 183.9L645.8 567.2M500.9 183.8L660.3 566.7M503.9 183.8L667.5 566.5M506.8 183.8L674.7 566.3M509.7 183.7L681.9 566.0M512.6 183.7L689.1 565.8M515.5 183.6L696.3 565.6M518.4 183.6L703.5 565.3M521.3 183.6L710.7 565.1M524.2 183.5L717.9 564.9M530.1 183.4L732.3 564.4M533.0 183.4L739.4 564.2M535.9 183.3L746.6 564.0M538.8 183.3L753.8 563.8M541.7 183.3L760.9 563.5M544.6 183.2L768.1 563.3M547.5 183.2L775.2 563.1M550.4 183.1L782.4 562.8M553.3 183.1L789.5 562.6M559.1 183.0L803.8 562.2M562.0 183.0L810.9 561.9M564.9 182.9L818.0 561.7M567.8 182.9L825.1 561.5M570.7 182.9L832.2 561.3M573.6 182.8L839.4 561.0M576.5 182.8L846.5 560.8M579.4 182.7L853.6 560.6M582.3 182.7L860.6 560.4M588.0 182.6L874.8 559.9M590.9 182.6L881.9 559.7M593.8 182.5L889.0 559.5M596.7 182.5L896.0 559.2M599.6 182.5L903.1 559.0M602.5 182.4L910.2 558.8M605.4 182.4L917.2 558.6M608.3 182.3L924.3 558.4M611.1 182.3L931.3 558.1M616.9 182.2L945.4 557.7M619.8 182.2L952.4 557.5M622.7 182.1L959.5 557.2M625.6 182.1L966.5 557.0M628.4 182.1L973.5 556.8M631.3 182.0L980.5 556.6M634.2 182.0L987.5 556.4M637.1 181.9L994.5 556.1M640.0 181.9L1001.5 555.9M645.7 181.8L1015.5 555.5M648.6 181.8L1022.5 555.2M651.5 181.7L1029.5 555.0M654.3 181.7L1036.5 554.8M657.2 181.7L1043.5 554.6M660.1 181.6L1050.4 554.4M663.0 181.6L1057.4 554.1M665.8 181.5L1064.3 553.9M668.7 181.5L1071.3 553.7M674.4 181.4L1085.2 553.3M677.3 181.4L1092.1 553.0M680.2 181.3L1099.1 552.8M683.0 181.3L1106.0 552.6M685.9 181.3L1112.9 552.4M688.8 181.2L1119.9 552.2M691.6 181.2L1126.8 551.9M694.5 181.1L1133.7 551.7M697.4 181.1L1140.6 551.5" stroke="url(#mg)" stroke-width="0.5" fill="none"/>
<path d="M112.4 189.3L700.2 181.1M112.4 189.3L-328.9 598.0M98.5 202.1L714.9 193.2M142.5 188.8L-250.2 595.5M83.2 216.3L731.0 206.5M172.6 188.4L-172.1 593.1M66.2 232.1L748.8 221.3M202.6 188.0L-94.5 590.6M47.2 249.6L768.6 237.6M232.5 187.6L-17.5 588.2M25.9 269.4L790.8 256.0M262.3 187.2L59.1 585.7M1.8 291.7L815.7 276.6M292.0 186.8L135.1 583.3M-25.6 317.1L844.0 300.1M321.7 186.3L210.6 580.9M-57.2 346.3L876.4 326.9M351.3 185.9L285.6 578.6M-93.9 380.3L913.8 357.8M380.8 185.5L360.0 576.2M-137.0 420.3L957.5 394.0M410.2 185.1L434.0 573.9M-188.6 468.0L1009.2 436.8M439.6 184.7L507.5 571.5M-251.2 526.0L1071.3 488.2M468.8 184.3L580.5 569.2M-328.9 598.0L1147.5 551.3M498.0 183.9L653.0 566.9M527.1 183.5L725.1 564.7M556.2 183.1L796.6 562.4M585.1 182.7L867.7 560.1M614.0 182.3L938.4 557.9M642.8 181.9L1008.5 555.7M671.6 181.5L1078.3 553.5M700.2 181.1L1147.5 551.3" stroke="url(#Mg)" stroke-width="0.6" fill="none"/>
<defs><linearGradient id="bg" gradientUnits="userSpaceOnUse" x1="0" y1="182" x2="0" y2="320"><stop offset="0" stop-color="#9dd5ea" stop-opacity="0.62"/><stop offset="1" stop-color="#a8dcee" stop-opacity="0.5"/></linearGradient></defs>
<path d="M-328.9 598.0 L112.4 189.3 L700.2 181.1 L1147.5 551.3 L1130.2 551.8 L696.5 184.1 L116.7 192.3 L-309.2 597.4Z" fill="url(#bg)"/>
<g id="tan" stroke-linejoin="round">
<path d="M254.6,274.3 Q256,277 262.6,277.2 L570,272.1 Q575,272.1 575.6,270.5 L573.6,280.7 Q572,284.8 569.5,285.6 L262,290.9 Q258,290.5 257.4,287.6 Z" fill="#959479" stroke="#5f6050" stroke-width="0.8"/>
<path d="M286,226 L296,223.5 L532.4,220 L541.5,224.5 L537.5,235.5 Q535,234.6 530,234.5 L296,237.8 Q291,238 289.5,239.6 L286,240 Z" fill="#9a997b"/>
<path d="M296,237.8 L530,234.5 Q535,234.6 537.5,235.5" stroke="#6a6b58" stroke-width="0.6" fill="none"/>
<path d="M541.5,224.5 L550.5,242.7 Q550.5,247 545.6,249 L544.1,247 L537.5,235.5 Z" fill="#7e7d65"/>
<path d="M286,227 L279.5,248 Q281.5,252.5 284,252.5 L287.2,250.7 L289.5,239.6 Z" fill="#a6a588"/>
<path d="M258.5,260 L275.5,260.5 L272.2,267.5 L259.3,267.8 Z" fill="#8b8b74"/>
<path d="M555,255.5 L572.5,255.5 L570.5,262.5 L558.3,262.5 Z" fill="#8b8b74"/>
<path fill-rule="evenodd" fill="#adac8e" stroke="#5f6050" stroke-width="0.7" d="M273.8,223.9 Q276.5,218.6 281.7,218.5 L540.5,215.2 Q548.5,215.3 551.8,219.3 L571.8,256.3 L555.8,256.3 L558.3,262.2 L573,262.4 Q576.3,262.8 576.2,265.5 L575.6,270.5 Q575,272.1 570,272.1 L262.6,277.2 Q256,277 254.6,274.3 L255.2,267.6 L272.2,266.9 L274.8,261.3 L258.9,260.9 Z M286.8,229.4 Q289,224.9 295.6,224.8 L532.4,221.3 Q538.5,221.5 540.5,225.4 L549.2,242.7 Q550,247.6 545.6,248.3 L286.3,252.1 Q281,251.5 280.7,248 Z"/>
</g>
<g id="red">
<path d="M198.5,422.1 L659.3,411.1 L653.3,426.7 L201.9,438 Z" fill="#c81c27"/>
<path d="M255,324 L590,318.4 L585.5,333.3 L260.6,339.8 Z" fill="#c21b26"/>
<path d="M255.5,324 L260.6,339.8 L249.4,375.5 L238.5,375.5 Z" fill="#c91c28"/>
<path d="M588,318 L613,368 L601.7,368 L585.5,333.3 Z" fill="#a9151f"/>
<path d="M213,383.5 L236,383.5 L231.5,396.5 L215.5,396.8 Z" fill="#bd1620"/>
<path d="M618.3,374 L640,374.5 L636.3,386.4 L623.7,386.6 Z" fill="#bd1620"/>
<path fill-rule="evenodd" fill="#e41f2b" d="M242,313.9 L601.9,306.7 L639.6,375 L619.3,374.8 L623.7,386.2 L636.2,386 L645.9,386.2 L659.3,411.1 L198.5,422.1 L208.2,396.4 L232.5,395.7 L235.3,383.9 L213.75,383.9 Z M256.9,325 L588,319.4 L611,367 L239.8,374.6 Z"/>
</g>

</svg>
<svg class="a" style="left:0;top:0" width="60" height="160" viewBox="0 106 60 160">
<g fill="#fdfdfd" stroke="#cdcdcd" stroke-width="0.7">
<path d="M15.5,117.6 Q28,115.8 40.5,117.6 Q42.3,134.5 40.5,151.5 Q28,153.3 15.5,151.5 Q13.7,134.5 15.5,117.6 Z"/>
</g>
<path d="M15.2,131.2 H40.8" stroke="#c9c9c9" stroke-width="0.8"/>
<text x="28" y="125.8" font-size="3.6" text-anchor="middle" fill="#9a9a9a" font-family="Liberation Sans" font-weight="bold">SUPERIOR</text>
<text x="28" y="144" font-size="4.6" text-anchor="middle" fill="#9a9a9a" font-family="Liberation Sans" font-weight="bold">FRONTAL</text>
<g fill="#fafafa" stroke="#c6c6c6" stroke-width="0.7">
<circle cx="15.8" cy="171.4" r="7.6"/><circle cx="15.8" cy="190" r="7.6"/><circle cx="15.8" cy="208.9" r="7.6"/><circle cx="15.8" cy="227.8" r="7.6"/><circle cx="15.8" cy="247" r="7.6"/>
</g>
<g fill="none" stroke="#bdbdbd" stroke-width="0.7">
<path d="M12.8,172 L15.8,168.8 L18.8,172 M13.6,171.2 V174.4 H18 V171.2"/>
<path d="M12.5,188 V186.7 H14 M17.6,186.7 H19.1 V188 M19.1,192 V193.3 H17.6 M14,193.3 H12.5 V192"/>
<path d="M15.8,205.6 V212.2 M12.5,208.9 H19.1"/>
<path d="M12.5,227.8 H19.1"/>
<path d="M12.8,246 Q15.8,250.5 18.8,246 M15.8,243.5 V249 M14,245 L15.8,243.3 L17.6,245"/>
</g>
</svg>
<div class="a" style="left:786px;top:388px;width:46px;height:7.5px;background:rgba(255,255,255,0.85)"></div>
<div class="a" style="left:791px;top:388.5px;font-size:5.2px;line-height:7px;color:#8b8e92;white-space:nowrap">Configuración</div>
<div class="a" style="left:755px;top:402px;font-size:5.6px;line-height:7px;color:#6b6f74;white-space:nowrap">Ajustar Rejilla</div>
<div class="a" style="left:793px;top:401.5px;width:38px;height:8.5px;background:rgba(255,255,255,0.85);border-left:1px solid #ececec"></div>
<div class="a" style="left:797px;top:402.3px;font-size:5.2px;line-height:7px;color:#a5a8ac;white-space:nowrap">1 mm</div>
<svg class="a" style="left:825px;top:405px" width="3" height="2" viewBox="0 0 3 2"><path d="M0 0H3L1.5 2Z" fill="#333"/></svg>

</div>
<!-- panel -->
<div class="a" style="left:831.5px;top:303.5px;width:7px;height:21px;background:#fbfbfb;border-radius:1px 0 0 1px;z-index:3"></div>
<svg class="a" style="left:833px;top:308.5px;z-index:4" width="5" height="11" viewBox="0 0 5 11"><path d="M0.9 0.8L3.9 5.5L0.9 10.2" stroke="#222" stroke-width="0.9" fill="none"/></svg>
<div class="a" style="left:836.5px;top:106px;width:123.5px;height:415px;background:#f8f8f9;border-left:1px solid #e9e9e9;overflow:hidden">
<svg class="a" style="left:0;top:0" width="123.5" height="416" viewBox="836.5 106 123.5 416">
<defs><pattern id="stripe" width="3" height="3" patternUnits="userSpaceOnUse" patternTransform="rotate(45)"><rect width="3" height="3" fill="#c9ccd3"/><rect width="1.3" height="3" fill="#eceef2"/></pattern><radialGradient id="sh" cx="50%" cy="50%" r="50%"><stop offset="0" stop-color="#000" stop-opacity="0.10"/><stop offset="1" stop-color="#000" stop-opacity="0"/></radialGradient></defs>
<path d="M847.5,114.5 L856,113.5 L864.5,114.5 V131 L856,130 L847.5,131 Z" fill="#d6f0f6"/><g fill="none" stroke="#36a5cc" stroke-width="0.9"><path d="M847.5,114.5 L856,113.5 L864.5,114.5 V131 L856,130 L847.5,131 Z"/><path d="M856,113.5 V130 M847.5,118.5 H864.5 M847.5,122.5 H864.5 M847.5,126.5 H864.5 M851.5,114 V130.5 M860,114 V130.5"/><path d="M889.5,114 H893 V127.5 H906.5 V131.5 H889.5 Z"/><path d="M893,117 H891 M893,120 H891 M893,123 H891 M896,127.5 V129.5 M899,127.5 V129.5 M902,127.5 V129.5"/><path d="M932,114.5 H946 V127 H941.5 L939,130.5 L936.5,127 H932 Z"/><path d="M935,118 H943 M935,121 H943 M935,124 H941"/></g>
<rect x="840.5" y="142.3" width="92.5" height="18.4" rx="1" fill="#f6f7f8" stroke="#ececec" stroke-width="0.6"/>
<text x="845.5" y="153.3" font-size="7" fill="#6e7177" font-family="Liberation Sans" textLength="48.2" lengthAdjust="spacingAndGlyphs">Formas básicas</text>
<path d="M925.8,150 L927.3,148.3 L928.8,150 Z M925.8,153.5 L927.3,155.2 L928.8,153.5 Z" fill="#333"/>
<rect x="935" y="142.3" width="18.6" height="18.4" rx="1" fill="#f6f7f8" stroke="#ececec" stroke-width="0.6"/>
<circle cx="943.5" cy="150.3" r="3.6" fill="none" stroke="#222" stroke-width="1.1"/><path d="M946.2,153 L949,155.8" stroke="#222" stroke-width="1.2"/>
<rect x="839.5" y="165.6" width="36.8" height="42.3" fill="#f9f9fa" stroke="#eaebed" stroke-width="0.8"/>
<rect x="878.8" y="165.6" width="36.8" height="42.3" fill="#f9f9fa" stroke="#eaebed" stroke-width="0.8"/>
<rect x="918.3" y="165.6" width="36.8" height="42.3" fill="#f9f9fa" stroke="#eaebed" stroke-width="0.8"/>
<rect x="839.5" y="212.1" width="36.8" height="42.3" fill="#f9f9fa" stroke="#eaebed" stroke-width="0.8"/>
<rect x="878.8" y="212.1" width="36.8" height="42.3" fill="#f9f9fa" stroke="#eaebed" stroke-width="0.8"/>
<rect x="918.3" y="212.1" width="36.8" height="42.3" fill="#f9f9fa" stroke="#eaebed" stroke-width="0.8"/>
<rect x="839.5" y="258.5" width="36.8" height="42.3" fill="#f9f9fa" stroke="#eaebed" stroke-width="0.8"/>
<rect x="878.8" y="258.5" width="36.8" height="42.3" fill="#f9f9fa" stroke="#eaebed" stroke-width="0.8"/>
<rect x="918.3" y="258.5" width="36.8" height="42.3" fill="#f9f9fa" stroke="#eaebed" stroke-width="0.8"/>
<rect x="839.5" y="305.0" width="36.8" height="42.3" fill="#f9f9fa" stroke="#eaebed" stroke-width="0.8"/>
<rect x="878.8" y="305.0" width="36.8" height="42.3" fill="#f9f9fa" stroke="#eaebed" stroke-width="0.8"/>
<rect x="918.3" y="305.0" width="36.8" height="42.3" fill="#f9f9fa" stroke="#eaebed" stroke-width="0.8"/>
<rect x="839.5" y="351.4" width="36.8" height="42.3" fill="#f9f9fa" stroke="#eaebed" stroke-width="0.8"/>
<rect x="878.8" y="351.4" width="36.8" height="42.3" fill="#f9f9fa" stroke="#eaebed" stroke-width="0.8"/>
<rect x="918.3" y="351.4" width="36.8" height="42.3" fill="#f9f9fa" stroke="#eaebed" stroke-width="0.8"/>
<rect x="839.5" y="397.9" width="36.8" height="42.3" fill="#f9f9fa" stroke="#eaebed" stroke-width="0.8"/>
<rect x="878.8" y="397.9" width="36.8" height="42.3" fill="#f9f9fa" stroke="#eaebed" stroke-width="0.8"/>
<rect x="918.3" y="397.9" width="36.8" height="42.3" fill="#f9f9fa" stroke="#eaebed" stroke-width="0.8"/>
<rect x="839.5" y="444.3" width="36.8" height="42.3" fill="#f9f9fa" stroke="#eaebed" stroke-width="0.8"/>
<rect x="878.8" y="444.3" width="36.8" height="42.3" fill="#f9f9fa" stroke="#eaebed" stroke-width="0.8"/>
<rect x="918.3" y="444.3" width="36.8" height="42.3" fill="#f9f9fa" stroke="#eaebed" stroke-width="0.8"/>
<rect x="839.5" y="490.8" width="36.8" height="42.3" fill="#f9f9fa" stroke="#eaebed" stroke-width="0.8"/>
<rect x="878.8" y="490.8" width="36.8" height="42.3" fill="#f9f9fa" stroke="#eaebed" stroke-width="0.8"/>
<rect x="918.3" y="490.8" width="36.8" height="42.3" fill="#f9f9fa" stroke="#eaebed" stroke-width="0.8"/>
<rect x="954.5" y="167" width="3.6" height="341" rx="1.8" fill="#c4c4c4"/>
<ellipse cx="858" cy="184.6" rx="13" ry="11" fill="url(#sh)"/>
<ellipse cx="897.3" cy="184.6" rx="13" ry="11" fill="url(#sh)"/>
<ellipse cx="936.8" cy="184.6" rx="13" ry="11" fill="url(#sh)"/>
<ellipse cx="858" cy="231.1" rx="13" ry="11" fill="url(#sh)"/>
<ellipse cx="897.3" cy="231.1" rx="13" ry="11" fill="url(#sh)"/>
<ellipse cx="936.8" cy="231.1" rx="13" ry="11" fill="url(#sh)"/>
<ellipse cx="858" cy="277.5" rx="13" ry="11" fill="url(#sh)"/>
<ellipse cx="897.3" cy="277.5" rx="13" ry="11" fill="url(#sh)"/>
<ellipse cx="936.8" cy="277.5" rx="13" ry="11" fill="url(#sh)"/>
<ellipse cx="858" cy="324.0" rx="13" ry="11" fill="url(#sh)"/>
<ellipse cx="897.3" cy="324.0" rx="13" ry="11" fill="url(#sh)"/>
<ellipse cx="936.8" cy="324.0" rx="13" ry="11" fill="url(#sh)"/>
<ellipse cx="858" cy="373.4" rx="13" ry="11" fill="url(#sh)"/>
<ellipse cx="897.3" cy="373.4" rx="13" ry="11" fill="url(#sh)"/>
<ellipse cx="936.8" cy="373.4" rx="13" ry="11" fill="url(#sh)"/>
<ellipse cx="858" cy="418.9" rx="13" ry="11" fill="url(#sh)"/>
<ellipse cx="897.3" cy="418.9" rx="13" ry="11" fill="url(#sh)"/>
<ellipse cx="936.8" cy="418.9" rx="13" ry="11" fill="url(#sh)"/>
<ellipse cx="858" cy="468.3" rx="13" ry="11" fill="url(#sh)"/>
<ellipse cx="897.3" cy="468.3" rx="13" ry="11" fill="url(#sh)"/>
<ellipse cx="936.8" cy="468.3" rx="13" ry="11" fill="url(#sh)"/>
<ellipse cx="858" cy="513.8" rx="13" ry="11" fill="url(#sh)"/>
<ellipse cx="897.3" cy="513.8" rx="13" ry="11" fill="url(#sh)"/>
<ellipse cx="936.8" cy="513.8" rx="13" ry="11" fill="url(#sh)"/>
<path d="M847,178.6 L853,175.1 L870,177.1 L869.5,194.6 L864.5,200.1 L847.5,196.6 Z" fill="url(#stripe)" stroke="#8d9098" stroke-width="0.5"/>
<path d="M847,178.6 L853,175.1 L870,177.1 L864.5,181.1 Z" fill="#e3e5e9" opacity="0.55"/>
<path d="M864.5,181.1 L870,177.1 L869.5,194.6 L864.5,200.1 Z" fill="#9a9ca3" opacity="0.35"/>
<path d="M888.3,179.1 A9.3,3.6 0 0 1 906.9,179.1 V196.1 A9.3,3.6 0 0 1 888.3,196.1 Z" fill="url(#stripe)" stroke="#8d9098" stroke-width="0.5"/>
<ellipse cx="897.6" cy="179.1" rx="9.3" ry="3.6" fill="#dfe1e5" stroke="#8d9098" stroke-width="0.5"/>
<path d="M925.5,178.6 L931.5,174.6 L948.5,176.6 L948,194.6 L943.5,200.1 L926,196.6 Z" fill="#d0101c"/>
<path d="M925.5,178.6 L931.5,174.6 L948.5,176.6 L943.5,180.6 Z" fill="#e6303a"/>
<path d="M943.5,180.6 L948.5,176.6 L948,194.6 L943.5,200.1 Z" fill="#b00c17"/>
<path d="M849,225.05 A9.2,3.5 0 0 1 867.4,225.05 V241.05 A9.2,3.5 0 0 1 849,241.05 Z" fill="#e07b1a"/>
<ellipse cx="858.2" cy="225.05" rx="9.2" ry="3.5" fill="#f08f2e"/>
<circle cx="897.4" cy="233.05" r="8.6" fill="#1b8fc9"/><circle cx="895" cy="230.55" r="4" fill="#3fb0e2" opacity="0.6"/>
<path d="M928,230.05 L931.5,227.05 L934,232.05 L937,224.05 L940,230.05 L943.5,223.05 L945.5,228.05 L945,241.05 L941,236.05 L938,242.05 L935,235.05 L931,241.05 L928,237.05 Z" fill="#a9cfe6"/>
<path d="M848,282.5 L861,270.5 L869.5,277.5 L866,287.5 Z" fill="#2ea043"/><path d="M848,282.5 L861,270.5 L863,285.5 Z" fill="#3bb34f"/>
<path d="M897.7,270.0 L888.9,285.0 A8.8,3.3 0 0 0 906.5,285.0 Z" fill="#7b3bb5"/>
<path d="M926,282.5 L931,273.5 Q936,267.5 942,270.0 Q947.5,273.5 946.5,280.5 L941.5,287.5 Z" fill="#62c4d8"/><path d="M926,282.5 L941.5,287.5 L946.5,280.5 L932,276.5 Z" fill="#3fa3bd" opacity="0.75"/>
<g transform="translate(847,330.95000000000005) skewY(6)"><text x="0" y="0" font-size="10" font-weight="bold" fill="#b3121c" stroke="#8e0d15" stroke-width="0.6" font-family="Liberation Sans" textLength="24" lengthAdjust="spacingAndGlyphs">TEXT</text></g>
<path d="M885.5,319.95000000000005 L903,321.45000000000005 L908.5,328.95000000000005 L904,336.95000000000005 L887,332.95000000000005 Z" fill="#22399a"/>
<path d="M935,314.95000000000005 L926.8,330.95000000000005 L939,336.45000000000005 L947.2,327.95000000000005 Z" fill="#f2cd17"/><path d="M935,314.95000000000005 L939,336.45000000000005 L947.2,327.95000000000005 Z" fill="#d7b20b"/>
<path d="M850,376.9 A8.8,8.5 0 0 1 867.6,376.9 A8.8,3.6 0 0 1 850,376.9 Z" fill="#d81b8d"/>
<path d="M889,361.4 L895,358.9 L905,360.4 L907.5,365.4 L906.5,382.4 L898,384.4 L890,381.4 Z" fill="#23369a"/>
<path d="M928.8,379.4 Q931,360.4 937,358.4 Q943,360.4 945.3,379.4 Q937,387.4 928.8,379.4 Z" fill="#cfd0d2"/><path d="M930,377.4 Q932,362.4 936,360.4 Q934,367.4 934,381.4 Z" fill="#eeeeef"/><path d="M941,365.4 Q944.5,370.4 945.3,379.4 Q941,383.4 938,383.4 Q942,375.4 941,365.4 Z" fill="#aeafb2"/>
<ellipse cx="858.7" cy="419.85" rx="8.8" ry="6" fill="#1b8fc9"/><ellipse cx="858.7" cy="418.85" rx="3.2" ry="1.4" fill="#f4f5f7"/>
<path d="M888.8,417.85 A9.2,4.5 0 0 1 907.2,417.85 V422.85 A9.2,4.5 0 0 1 888.8,422.85 Z" fill="#d8741a"/><ellipse cx="898" cy="417.85" rx="9.2" ry="4.5" fill="#eb8a2c"/><ellipse cx="898" cy="417.35" rx="3.5" ry="1.8" fill="#b85e10"/>
<path d="M929,415.85 Q931,410.35 937,412.85 Q943,409.85 947,414.85 Q946,422.85 940,426.85 Q933,424.85 929,421.85 Z" fill="#9c6a44"/>
<path d="M850.5,466.30000000000007 L857,465.80000000000007 L860,462.80000000000007 L862.5,466.30000000000007 L868,467.80000000000007 L862.5,470.30000000000007 L860,473.30000000000007 L856.5,470.30000000000007 L850.5,471.30000000000007 L854.5,468.30000000000007 Z" fill="#4aaed0"/>
<path d="M889,464.30000000000007 L895,463.80000000000007 L898,460.30000000000007 L901,463.80000000000007 L906.8,464.80000000000007 L904,469.30000000000007 L906,473.30000000000007 L900,471.30000000000007 L897,473.30000000000007 L895,470.30000000000007 L889,470.30000000000007 L891.5,467.30000000000007 Z" fill="#e0c21c"/>
<path d="M932,459.30000000000007 L941,457.80000000000007 L945.5,465.30000000000007 L944,472.30000000000007 L937,474.30000000000007 L929,470.30000000000007 L928.8,464.30000000000007 Z" fill="#d8101c"/><path d="M932,459.30000000000007 L941,457.80000000000007 L945.5,465.30000000000007 L936,467.30000000000007 Z" fill="#ee2a35" opacity="0.8"/>
<path d="M850.2,510.75 A8.6,3.3 0 0 1 867.5,510.75 V515.25 A8.6,3.5 0 0 1 850.2,515.25 Z" fill="#8a5a35"/><ellipse cx="858.8" cy="510.75" rx="7.3" ry="2.3" fill="#f0ece6"/>
<path d="M887,509.75 Q887.5,505.25 895,504.75 Q905,504.75 907.5,508.75 Q909,517.75 907,524.75 L887,524.75 Q885.5,517.75 887,509.75 Z" fill="#b4b5b8"/><path d="M898,513.75 L905.5,510.75 L903,518.75 Z" fill="#f2f2f2"/><path d="M887,509.75 Q887.5,505.25 895,504.75 Q905,504.75 907.5,508.75 L898,513.75 Z" fill="#d2d3d6"/>
<path d="M929,514.75 L933,510.25 L941,510.25 L944.8,514.75 L941.5,520.75 L932.5,520.75 Z" fill="#5db6d8"/><path d="M929,514.75 L933,510.25 L941,510.25 L944.8,514.75 L941,517.25 L932.5,517.25 Z" fill="#8fd0ea"/>
</svg>
</div>
</body></html>
